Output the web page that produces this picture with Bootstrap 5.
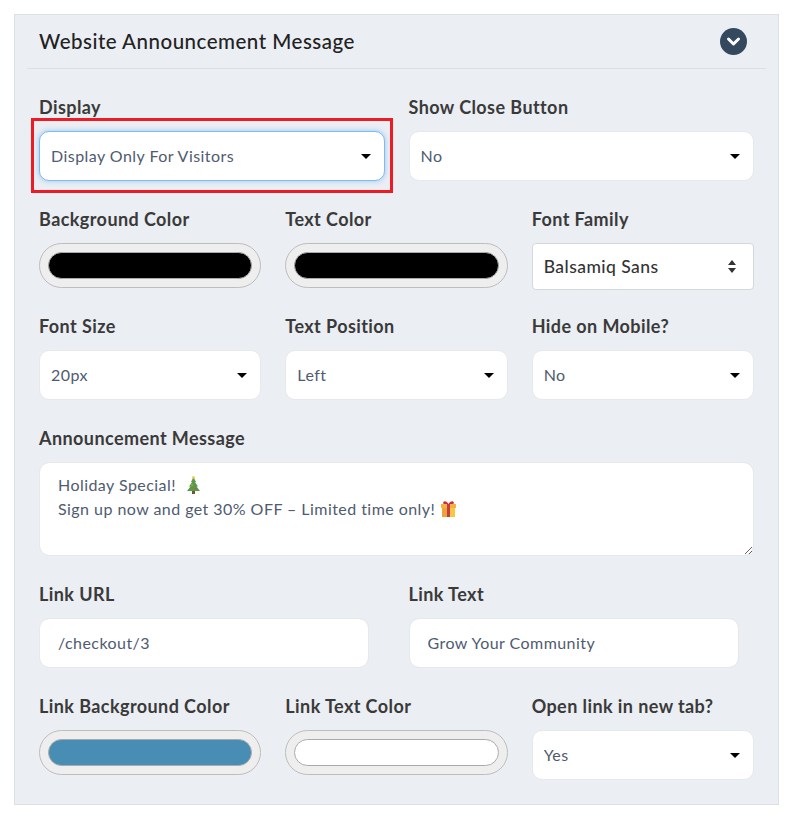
<!DOCTYPE html>
<html lang="en">
<head>
  <meta charset="UTF-8" />
  <title>Website Announcement Message</title>
  <meta name="viewport" content="width=device-width, initial-scale=1" />
  <link href="https://cdn.jsdelivr.net/npm/bootstrap@5.3.3/dist/css/bootstrap.min.css" rel="stylesheet" />
  <style>
    body {
      background-color: #fff;
      font-family: "Lato", "Liberation Sans", sans-serif;
      padding: 14px 13px 0 14px;
    }
    .announce-panel {
      background-color: #ebeef3;
      border: 1px solid #dcdfe4;
      padding: 0 24px;
    }
    .panel-head {
      height: 54px;
      margin: 0 -12px 26px;
      padding: 0 12px;
      border-bottom: 1px solid #dcdfe4;
    }
    .panel-title {
      font-size: 20.5px;
      font-weight: 500;
      color: #222;
      margin: 0;
      letter-spacing: 0.5px;
    }
    .toggle-circle {
      width: 27px;
      height: 27px;
      margin-right: 7px;
      background-color: #34495e;
    }
    .field {
      margin-bottom: 26px;
    }
    .field-last {
      margin-bottom: 24px;
    }
    .field-label {
      display: block;
      font-size: 18px;
      font-weight: 700;
      line-height: 24px;
      color: #3a3a3a;
      margin-bottom: 12px;
      letter-spacing: 0.42px;
    }
    .field .form-select,
    .field .form-control {
      font-family: "Lato", "Liberation Sans", sans-serif;
      font-size: 16px;
      color: #4f5b70;
      border: 1px solid #e6e8ec;
      border-radius: 10px;
      box-shadow: none;
      letter-spacing: 0.45px;
    }
    .field .form-select {
      height: 50px;
      padding: 0 30px 0 11px;
      background-image: url("data:image/svg+xml,%3Csvg xmlns='http://www.w3.org/2000/svg' viewBox='0 0 10 5'%3E%3Cpath d='M0 0h10L5 5z' fill='%23000'/%3E%3C/svg%3E");
      background-size: 10px 5px;
      background-position: right 13px top 22px;
    }
    .field .select-focus {
      border-color: #7dbcf2;
      box-shadow: 0 0 4px 1px rgba(125, 188, 242, .55);
    }
    .field .select-font {
      height: 47px;
      padding-top: 2px;
      border: 1px solid #d4d7dc;
      border-radius: 4px;
      font-size: 17.5px;
      font-weight: 500;
      color: #333;
      background-image: url("data:image/svg+xml,%3Csvg xmlns='http://www.w3.org/2000/svg' viewBox='0 0 10 13'%3E%3Cpath d='M1 5l4-5 4 5zM1 8l4 5 4-5z' fill='%23333'/%3E%3C/svg%3E");
      background-size: 10px 13px;
      background-position: right 16px center;
    }
    .field .input-text {
      height: 50px;
      width: 330px;
      padding: 0 18px 2px;
    }
    .message-box {
      height: 94px;
      padding: 10px 18px;
      line-height: 24px;
      overflow: auto;
      resize: both;
    }
    .emoji-svg {
      width: 17px;
      height: 18px;
      vertical-align: -3px;
    }
    .colour-pill {
      display: block;
      width: 100%;
      height: 45px;
      padding: 8px;
      border: 1px solid #bdbdbd;
      border-radius: 23px;
      background-color: #eee;
      appearance: none;
      -webkit-appearance: none;
    }
    .colour-pill::-webkit-color-swatch-wrapper {
      padding: 0;
    }
    .colour-pill::-webkit-color-swatch {
      border: 1px solid #aaa;
      border-radius: 14px;
    }
    .red-frame {
      position: absolute;
      left: 4px;
      top: 23px;
      width: 362px;
      height: 75px;
      border: 3px solid #ed1c24;
      pointer-events: none;
    }
  </style>
</head>
<body>
  <div class="announce-panel">
    <div class="panel-head d-flex align-items-center justify-content-between">
      <h2 class="panel-title">Website Announcement Message</h2>
      <span class="toggle-circle rounded-circle d-flex align-items-center justify-content-center">
        <svg width="15" height="11" viewBox="0 0 15 11"><path d="M2.5 3l5 5 5-5" fill="none" stroke="#fff" stroke-width="3" stroke-linecap="round" stroke-linejoin="round"/></svg>
      </span>
    </div>

    <div class="row">
      <div class="col-6 position-relative">
        <div class="field">
          <label class="field-label">Display</label>
          <select class="form-select select-focus"><option>Display Only For Visitors</option></select>
        </div>
        <div class="red-frame"></div>
      </div>
      <div class="col-6">
        <div class="field">
          <label class="field-label">Show Close Button</label>
          <select class="form-select"><option>No</option></select>
        </div>
      </div>
    </div>

    <div class="row">
      <div class="col-4">
        <div class="field">
          <label class="field-label">Background Color</label>
          <input type="color" class="colour-pill" value="#000000" />
        </div>
      </div>
      <div class="col-4">
        <div class="field">
          <label class="field-label">Text Color</label>
          <input type="color" class="colour-pill" value="#000000" />
        </div>
      </div>
      <div class="col-4">
        <div class="field field-last">
          <label class="field-label">Font Family</label>
          <select class="form-select select-font"><option>Balsamiq Sans</option></select>
        </div>
      </div>
    </div>

    <div class="row">
      <div class="col-4">
        <div class="field">
          <label class="field-label">Font Size</label>
          <select class="form-select"><option>20px</option></select>
        </div>
      </div>
      <div class="col-4">
        <div class="field">
          <label class="field-label">Text Position</label>
          <select class="form-select"><option>Left</option></select>
        </div>
      </div>
      <div class="col-4">
        <div class="field">
          <label class="field-label">Hide on Mobile?</label>
          <select class="form-select"><option>No</option></select>
        </div>
      </div>
    </div>

    <div class="row">
      <div class="col-12">
        <div class="field">
          <label class="field-label">Announcement Message</label>
          <div class="form-control message-box">
            Holiday Special!&nbsp;
            <svg class="emoji-svg" viewBox="0 0 17 18"><path d="M8.5 1L11 6H10l3 4.500H11.500L15 15H2l3.500-4.500H4l3-4.500H6z" fill="#5a9a48"/><rect x="7" y="15" width="3" height="3" fill="#7a5230"/><circle cx="8.500" cy="1.500" r="1.300" fill="#f2c230"/><circle cx="7" cy="9" r=".8" fill="#e8b23a"/><circle cx="10.500" cy="12.500" r=".8" fill="#d9483b"/></svg><br />
            Sign up now and get 30% OFF – Limited time only!
            <svg class="emoji-svg" viewBox="0 0 17 18"><rect x="1" y="4" width="15" height="4" fill="#f5b03f"/><rect x="2" y="8" width="13" height="9" fill="#f0a23a"/><rect x="10" y="8" width="5" height="9" fill="#f8c63f"/><rect x="7" y="4" width="3" height="13" fill="#c23a4a"/><path d="M8.500 4C6 0 2 1 3.500 4zM8.500 4C11 0 15 1 13.500 4z" fill="#c8323f"/></svg>
          </div>
        </div>
      </div>
    </div>

    <div class="row">
      <div class="col-6">
        <div class="field">
          <label class="field-label">Link URL</label>
          <input type="text" class="form-control input-text" value="/checkout/3" />
        </div>
      </div>
      <div class="col-6">
        <div class="field">
          <label class="field-label">Link Text</label>
          <input type="text" class="form-control input-text" value="Grow Your Community" />
        </div>
      </div>
    </div>

    <div class="row">
      <div class="col-4">
        <div class="field">
          <label class="field-label">Link Background Color</label>
          <input type="color" class="colour-pill" value="#488db3" />
        </div>
      </div>
      <div class="col-4">
        <div class="field">
          <label class="field-label">Link Text Color</label>
          <input type="color" class="colour-pill" value="#ffffff" />
        </div>
      </div>
      <div class="col-4">
        <div class="field field-last">
          <label class="field-label">Open link in new tab?</label>
          <select class="form-select"><option>Yes</option></select>
        </div>
      </div>
    </div>
  </div>
  <script src="https://cdn.jsdelivr.net/npm/bootstrap@5.3.3/dist/js/bootstrap.bundle.min.js"></script>
</body>
</html>
